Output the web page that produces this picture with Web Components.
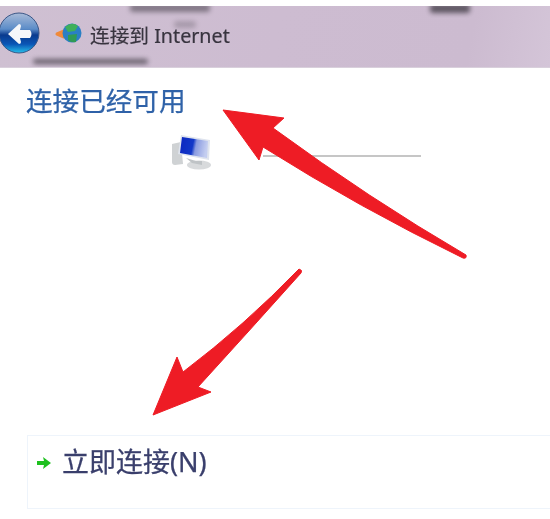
<!DOCTYPE html>
<html lang="zh">
<head>
<meta charset="utf-8">
<title>连接到 Internet</title>
<style>
  html, body { margin: 0; padding: 0; background: #fff; overflow: hidden; }
  body { width: 550px; height: 519px; font-family: "Noto Sans", "Noto Sans CJK SC", sans-serif; }
</style>
</head>
<body>
<connect-wizard>
  <wizard-header label="连接到 Internet"></wizard-header>
  <wizard-heading>连接已经可用</wizard-heading>
  <connection-row></connection-row>
  <wizard-action>立即连接(N)</wizard-action>
</connect-wizard>

<script>
// Connect-to-internet wizard page, plus the two red callout arrows on top of it

class ConnectWizard extends HTMLElement {
  constructor() {
    super();
    this.attachShadow({ mode: 'open' });
  }

  connectedCallback() {
    this.shadowRoot.innerHTML = `
      <style>
        :host {
          display: flex;
          flex-direction: column;
          position: relative;
          width: 550px;
          height: 519px;
          padding-top: 6px;
          box-sizing: border-box;
          overflow: hidden;
          background: #fff;
        }
        .arrows {
          position: absolute;
          left: 0;
          top: 0;
          width: 550px;
          height: 519px;
          pointer-events: none;
        }
      </style>
      <slot></slot>
      <svg class="arrows" viewBox="0 0 550 519">
        <g fill="#ee1c25" stroke="#ee1c25" stroke-width="1" stroke-linejoin="round">
          <path d="M223 110 L284 118 L273 128 Q370 199 466 255 Q467 259 463 258 Q360 208 263 147 L259 160 Z"/>
          <path d="M153 415 L177 357 L183 372 Q245 325 299 269 Q303 270 301 273 Q250 330 198 387 L211 392 Z"/>
        </g>
      </svg>
    `;
  }
}

class WizardHeader extends HTMLElement {
  constructor() {
    super();
    this.attachShadow({ mode: 'open' });
  }

  connectedCallback() {
    const label = this.getAttribute('label') || '';
    this.shadowRoot.innerHTML = `
      <style>
        :host {
          display: flex;
          align-items: center;
          position: relative;
          height: 62px;
          box-sizing: border-box;
          padding-bottom: 8px;
          overflow: hidden;
          background: linear-gradient(100deg, #cfc0d2 0%, #cdbcd1 50%, #ccbbd0 85%, #d4c5d8 100%);
          border-bottom: 1px solid #d9d0dc;
        }
        .back { flex: none; width: 42px; height: 42px; margin-left: -2px; filter: blur(0.5px); }
        .globe { flex: none; width: 28px; height: 22px; margin-left: 15px; filter: blur(0.5px); }
        .label {
          margin: 6px 0 0 7px;
          font-size: 19.7px;
          line-height: 26px;
          color: #38343f;
          white-space: nowrap;
          -webkit-text-stroke: 0.2px #38343f;
          filter: blur(0.5px);
        }
        /* blurred leftovers of the window behind, they carry no text */
        .smudge {
          position: absolute;
          background: #4c4650;
          border-radius: 3px;
          filter: blur(2.5px);
        }
      </style>
      <svg class="back" viewBox="0 0 42 42">
        <defs>
          <linearGradient id="orb" x1="0" y1="0" x2="0" y2="1">
            <stop offset="0" stop-color="#a9bbd8"/>
            <stop offset="0.4" stop-color="#5b8cc8"/>
            <stop offset="0.55" stop-color="#0a3a8e"/>
            <stop offset="0.78" stop-color="#0a56b6"/>
            <stop offset="1" stop-color="#27c0ea"/>
          </linearGradient>
        </defs>
        <circle cx="21" cy="21" r="20" fill="url(#orb)" stroke="#3a5686" stroke-width="1"/>
        <path d="M10 22 L21 12 Q23 12 23 14 L22 18 L32 18 Q35 22 32 26 L22 26 L23 30 Q23 32 21 32 Z" fill="#f6f7fa"/>
      </svg>
      <svg class="globe" viewBox="0 0 28 22">
        <path d="M2 12 L9 9 L9 15 Z" fill="#f08a3a" stroke="#f08a3a" stroke-width="3" stroke-linejoin="round"/>
        <circle cx="17" cy="11" r="9.5" fill="#2a7fc4"/>
        <path d="M10 5 Q17 -1 23 4 L20 9 L13 10 Z" fill="#3fb05a"/>
        <path d="M13 13 L22 12 L21 20 Q16 21 13 18 Z" fill="#2f9a55"/>
      </svg>
      <span class="label">${label}</span>
      <i class="smudge" style="left:130px;top:-2px;width:80px;height:8px;opacity:.6"></i>
      <i class="smudge" style="left:174px;top:15px;width:22px;height:7px;opacity:.3"></i>
      <i class="smudge" style="left:33px;top:53px;width:115px;height:5px;opacity:.8"></i>
      <i class="smudge" style="left:430px;top:-2px;width:40px;height:9px;opacity:.85"></i>
    `;
  }
}

class WizardHeading extends HTMLElement {
  constructor() {
    super();
    this.attachShadow({ mode: 'open' });
  }

  connectedCallback() {
    this.shadowRoot.innerHTML = `
      <style>
        :host {
          display: block;
          margin: 14px 0 0 26px;
          font-size: 26.6px;
          line-height: 38px;
          color: #2f62a8;
          -webkit-text-stroke: 0.25px #2f62a8;
          filter: blur(0.5px);
        }
      </style>
      <slot></slot>
    `;
  }
}

class ConnectionRow extends HTMLElement {
  constructor() {
    super();
    this.attachShadow({ mode: 'open' });
  }

  connectedCallback() {
    this.shadowRoot.innerHTML = `
      <style>
        :host {
          display: flex;
          align-items: center;
          gap: 51px;
          height: 36px;
          margin: 15px 0 0 172px;
        }
        svg { flex: none; width: 40px; height: 36px; filter: blur(0.6px); }
        .line { width: 158px; height: 2px; background: #c6c6c6; margin-top: 6px; }
      </style>
      <svg viewBox="0 0 40 36">
        <defs>
          <linearGradient id="screen" x1="0" y1="0" x2="1" y2="0.15">
            <stop offset="0" stop-color="#0c26c0"/>
            <stop offset="0.5" stop-color="#1238c8"/>
            <stop offset="0.62" stop-color="#8a9be0"/>
            <stop offset="1" stop-color="#c3cdf0"/>
          </linearGradient>
        </defs>
        <path d="M0 9 L9 7 L11 29 L3 30 Q0 30 0 27 Z" fill="#cfd2d4"/>
        <ellipse cx="27" cy="30" rx="12" ry="4.5" fill="#d8dadc"/>
        <path d="M14 23 L24 26 L30 26 L30 30 L20 28 Z" fill="#bfc3c6"/>
        <path d="M9 0 L38 5 L37 25 L6 19 Z" fill="#dfe4ee"/>
        <path d="M10 2 L36 6 L35 23 L8 18 Z" fill="url(#screen)"/>
      </svg>
      <div class="line"></div>
    `;
  }
}

class WizardAction extends HTMLElement {
  constructor() {
    super();
    this.attachShadow({ mode: 'open' });
  }

  connectedCallback() {
    this.shadowRoot.innerHTML = `
      <style>
        :host {
          display: flex;
          align-items: flex-start;
          gap: 10px;
          height: 74px;
          box-sizing: border-box;
          margin: 264px 0 0 27px;
          padding: 7px 0 0 8px;
          border: 1px solid #eef4fb;
          border-right: none;
          font-size: 27px;
          line-height: 37px;
          color: #3a3f6c;
          -webkit-text-stroke: 0.25px #3a3f6c;
        }
        svg { flex: none; width: 16px; height: 14px; margin-top: 13px; filter: blur(0.5px); }
        span { filter: blur(0.5px); white-space: nowrap; }
      </style>
      <svg viewBox="0 0 16 14">
        <path d="M1 5 L8 5 L7 1 L15 7 L7 13 L8 9 L1 9 Z" fill="#1ec01f"/>
      </svg>
      <span><slot></slot></span>
    `;
  }
}

customElements.define('connect-wizard', ConnectWizard);
customElements.define('wizard-header', WizardHeader);
customElements.define('wizard-heading', WizardHeading);
customElements.define('connection-row', ConnectionRow);
customElements.define('wizard-action', WizardAction);
</script>
</body>
</html>
